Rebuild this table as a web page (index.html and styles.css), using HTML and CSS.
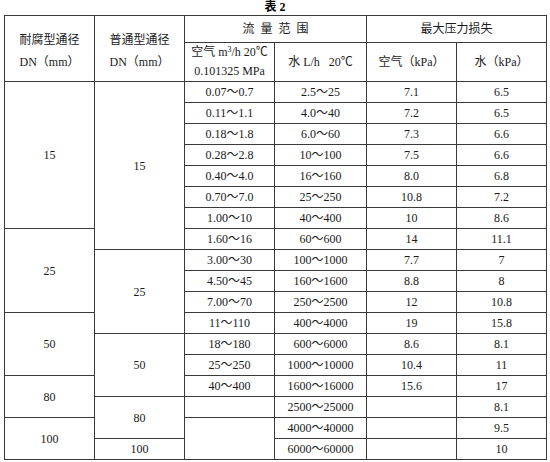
FILE: index.html
```html
<!DOCTYPE html>
<html lang="zh">
<head>
<meta charset="utf-8">
<link rel="stylesheet" href="styles.css">
</head>
<body>
<div class="title">表 2</div>
<table class="grid">
  <colgroup>
    <col class="c1"><col class="c2"><col class="c3"><col class="c4"><col class="c5"><col class="c6">
  </colgroup>
  <thead>
    <tr>
      <th rowspan="2"><div class="box tall"><div class="ln22">耐腐型通径</div><div class="ln22">DN（mm）</div></div></th>
      <th rowspan="2"><div class="box tall"><div class="ln22">普通型通径</div><div class="ln22">DN（mm）</div></div></th>
      <th colspan="2"><div class="box top"><span class="spaced">流量范围</span></div></th>
      <th colspan="2"><div class="box top">最大压力损失</div></th>
    </tr>
    <tr>
      <th><div class="box sub"><div class="ln19">空气 m<sup>3</sup>/h 20℃</div><div class="ln19">0.101325 MPa</div></div></th>
      <th><div class="box sub">水 L/h&nbsp;&nbsp;&nbsp;20℃</div></th>
      <th><div class="box sub">空气（kPa）</div></th>
      <th><div class="box sub">水（kPa）</div></th>
    </tr>
  </thead>
  <tbody>
    <tr><td rowspan="7">15</td><td rowspan="8">15</td><td>0.07～0.7</td><td>2.5～25</td><td>7.1</td><td>6.5</td></tr>
    <tr><td>0.11～1.1</td><td>4.0～40</td><td>7.2</td><td>6.5</td></tr>
    <tr><td>0.18～1.8</td><td>6.0～60</td><td>7.3</td><td>6.6</td></tr>
    <tr><td>0.28～2.8</td><td>10～100</td><td>7.5</td><td>6.6</td></tr>
    <tr><td>0.40～4.0</td><td>16～160</td><td>8.0</td><td>6.8</td></tr>
    <tr><td>0.70～7.0</td><td>25～250</td><td>10.8</td><td>7.2</td></tr>
    <tr><td>1.00～10</td><td>40～400</td><td>10</td><td>8.6</td></tr>
    <tr><td rowspan="4">25</td><td>1.60～16</td><td>60～600</td><td>14</td><td>11.1</td></tr>
    <tr><td rowspan="4">25</td><td>3.00～30</td><td>100～1000</td><td>7.7</td><td>7</td></tr>
    <tr><td>4.50～45</td><td>160～1600</td><td>8.8</td><td>8</td></tr>
    <tr><td>7.00～70</td><td>250～2500</td><td>12</td><td>10.8</td></tr>
    <tr><td rowspan="3">50</td><td>11～110</td><td>400～4000</td><td>19</td><td>15.8</td></tr>
    <tr><td rowspan="3">50</td><td>18～180</td><td>600～6000</td><td>8.6</td><td>8.1</td></tr>
    <tr><td>25～250</td><td>1000～10000</td><td>10.4</td><td>11</td></tr>
    <tr><td rowspan="2">80</td><td>40～400</td><td>1600～16000</td><td>15.6</td><td>17</td></tr>
    <tr><td rowspan="2">80</td><td></td><td>2500～25000</td><td></td><td>8.1</td></tr>
    <tr><td rowspan="2">100</td><td rowspan="2"></td><td>4000～40000</td><td></td><td>9.5</td></tr>
    <tr><td>100</td><td>6000～60000</td><td></td><td>10</td></tr>
  </tbody>
</table>
</body>
</html>
```
FILE: styles.css
```css
html, body {
  margin: 0;
  padding: 0;
  background: #ffffff;
}
body {
  font-family: "Liberation Serif", "Noto Sans CJK SC", serif;
  font-size: 12px;
  color: #1a1a1a;
}
.title {
  height: 15px;
  line-height: 15px;
  text-align: center;
  font-weight: bold;
  font-size: 12px;
  color: #000;
  overflow: hidden;
}
.grid {
  margin-left: 4px;
  width: 543px;
  border-collapse: collapse;
  table-layout: fixed;
}
.c1, .c2, .c3, .c5, .c6 { width: 90px; }
.c4 { width: 92px; }
.grid th, .grid td {
  border: 1px solid #3a3a3a;
  padding: 0;
  text-align: center;
  vertical-align: middle;
  font-weight: normal;
  line-height: 14px;
}
.grid tbody tr { height: 21px; }
.box {
  display: flex;
  flex-direction: column;
  justify-content: center;
  align-items: center;
  white-space: nowrap;
  overflow: hidden;
}
.top { height: 26px; }
.sub { height: 38px; }
.tall { height: 65px; padding-top: 4px; box-sizing: border-box; }
.ln19 { height: 19px; line-height: 19px; }
.ln22 { height: 22px; line-height: 22px; }
.spaced { letter-spacing: 6px; margin-right: -6px; }
sup {
  font-size: 8px;
  line-height: 0;
  vertical-align: 4px;
}
```
